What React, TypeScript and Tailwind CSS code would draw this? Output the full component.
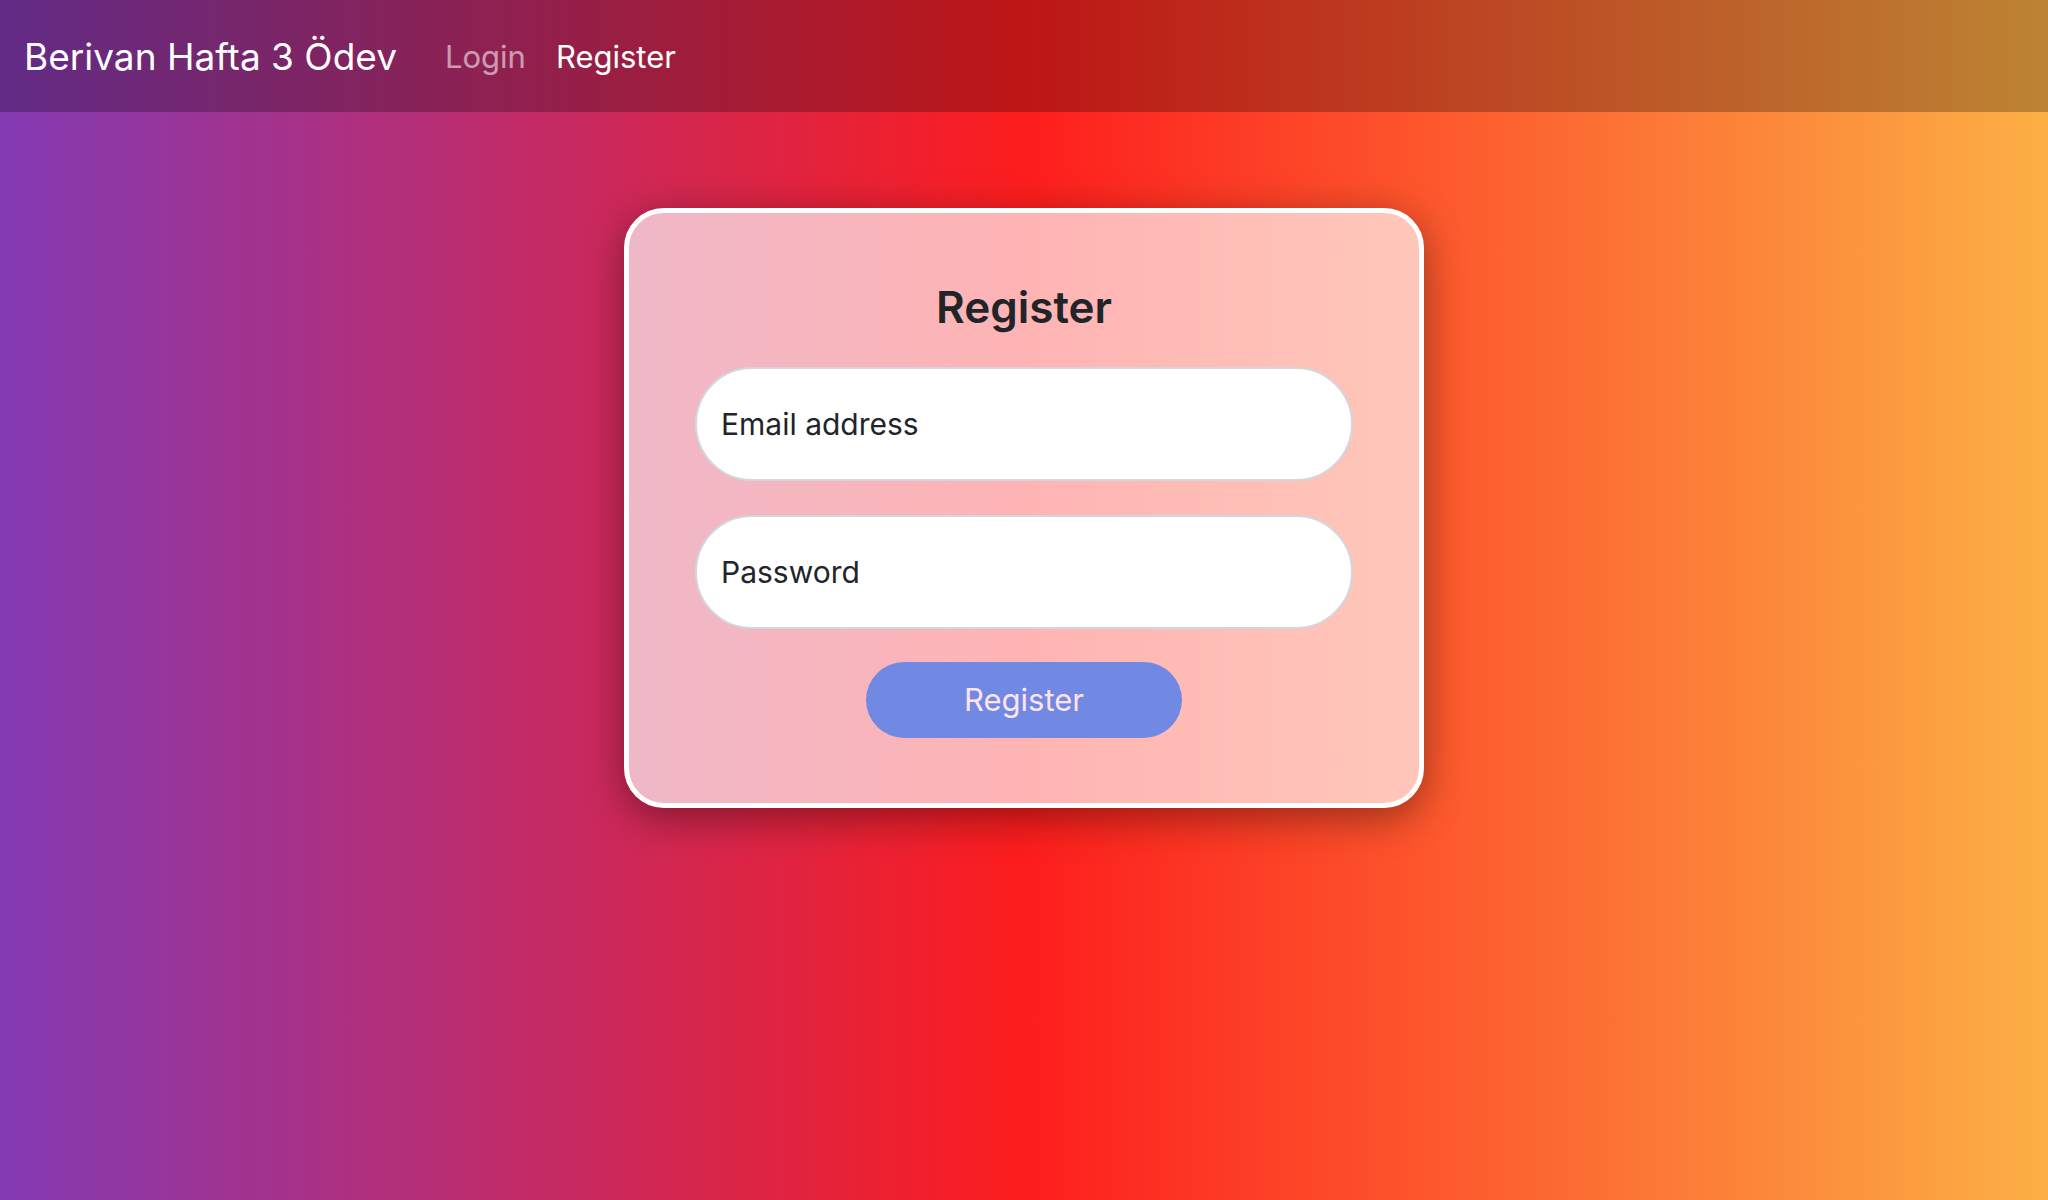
export default function App() {
  return (
    <div
      className="min-h-screen w-full bg-[linear-gradient(90deg,#833ab4_0%,#fd1d1d_50%,#fcb045_100%)] text-[#212529]"
      style={{ fontFamily: "Inter, 'Noto Sans', sans-serif" }}
    >
      <nav className="h-[112px] bg-black/25 flex items-center px-[24px]">
        <a className="text-[37px] text-white leading-none mr-[48px]">Berivan Hafta 3 Ödev</a>
        <div className="flex items-center gap-[30px] text-[31px] leading-none">
          <a className="text-white/55">Login</a>
          <a className="text-white">Register</a>
        </div>
      </nav>

      <main className="flex justify-center pt-[96px]">
        <div className="w-[800px] border-[5px] border-white rounded-[40px] bg-white/[0.67] shadow-[0_10px_40px_rgba(0,0,0,0.4)] px-[66px] pt-[68px] pb-[65px]">
          <h2 className="text-center text-[44px] leading-[1.2] font-semibold mb-[33px]">Register</h2>
          <form className="flex flex-col items-center gap-[34px]">
            <input
              type="email"
              placeholder="Email address"
              className="w-full h-[114px] rounded-full bg-white border-2 border-[#d3d6dc] px-[24px] text-[30px] text-[#212529] placeholder:text-[#212529] outline-none"
            />
            <input
              type="password"
              placeholder="Password"
              className="w-full h-[114px] rounded-full bg-white border-2 border-[#d3d6dc] px-[24px] text-[30px] text-[#212529] placeholder:text-[#212529] outline-none"
            />
            <button
              type="button"
              className="w-[316px] h-[76px] -mt-[1px] rounded-full bg-[#7289e3] text-[#fde3ea] text-[31px]"
            >
              Register
            </button>
          </form>
        </div>
      </main>
    </div>
  )
}
